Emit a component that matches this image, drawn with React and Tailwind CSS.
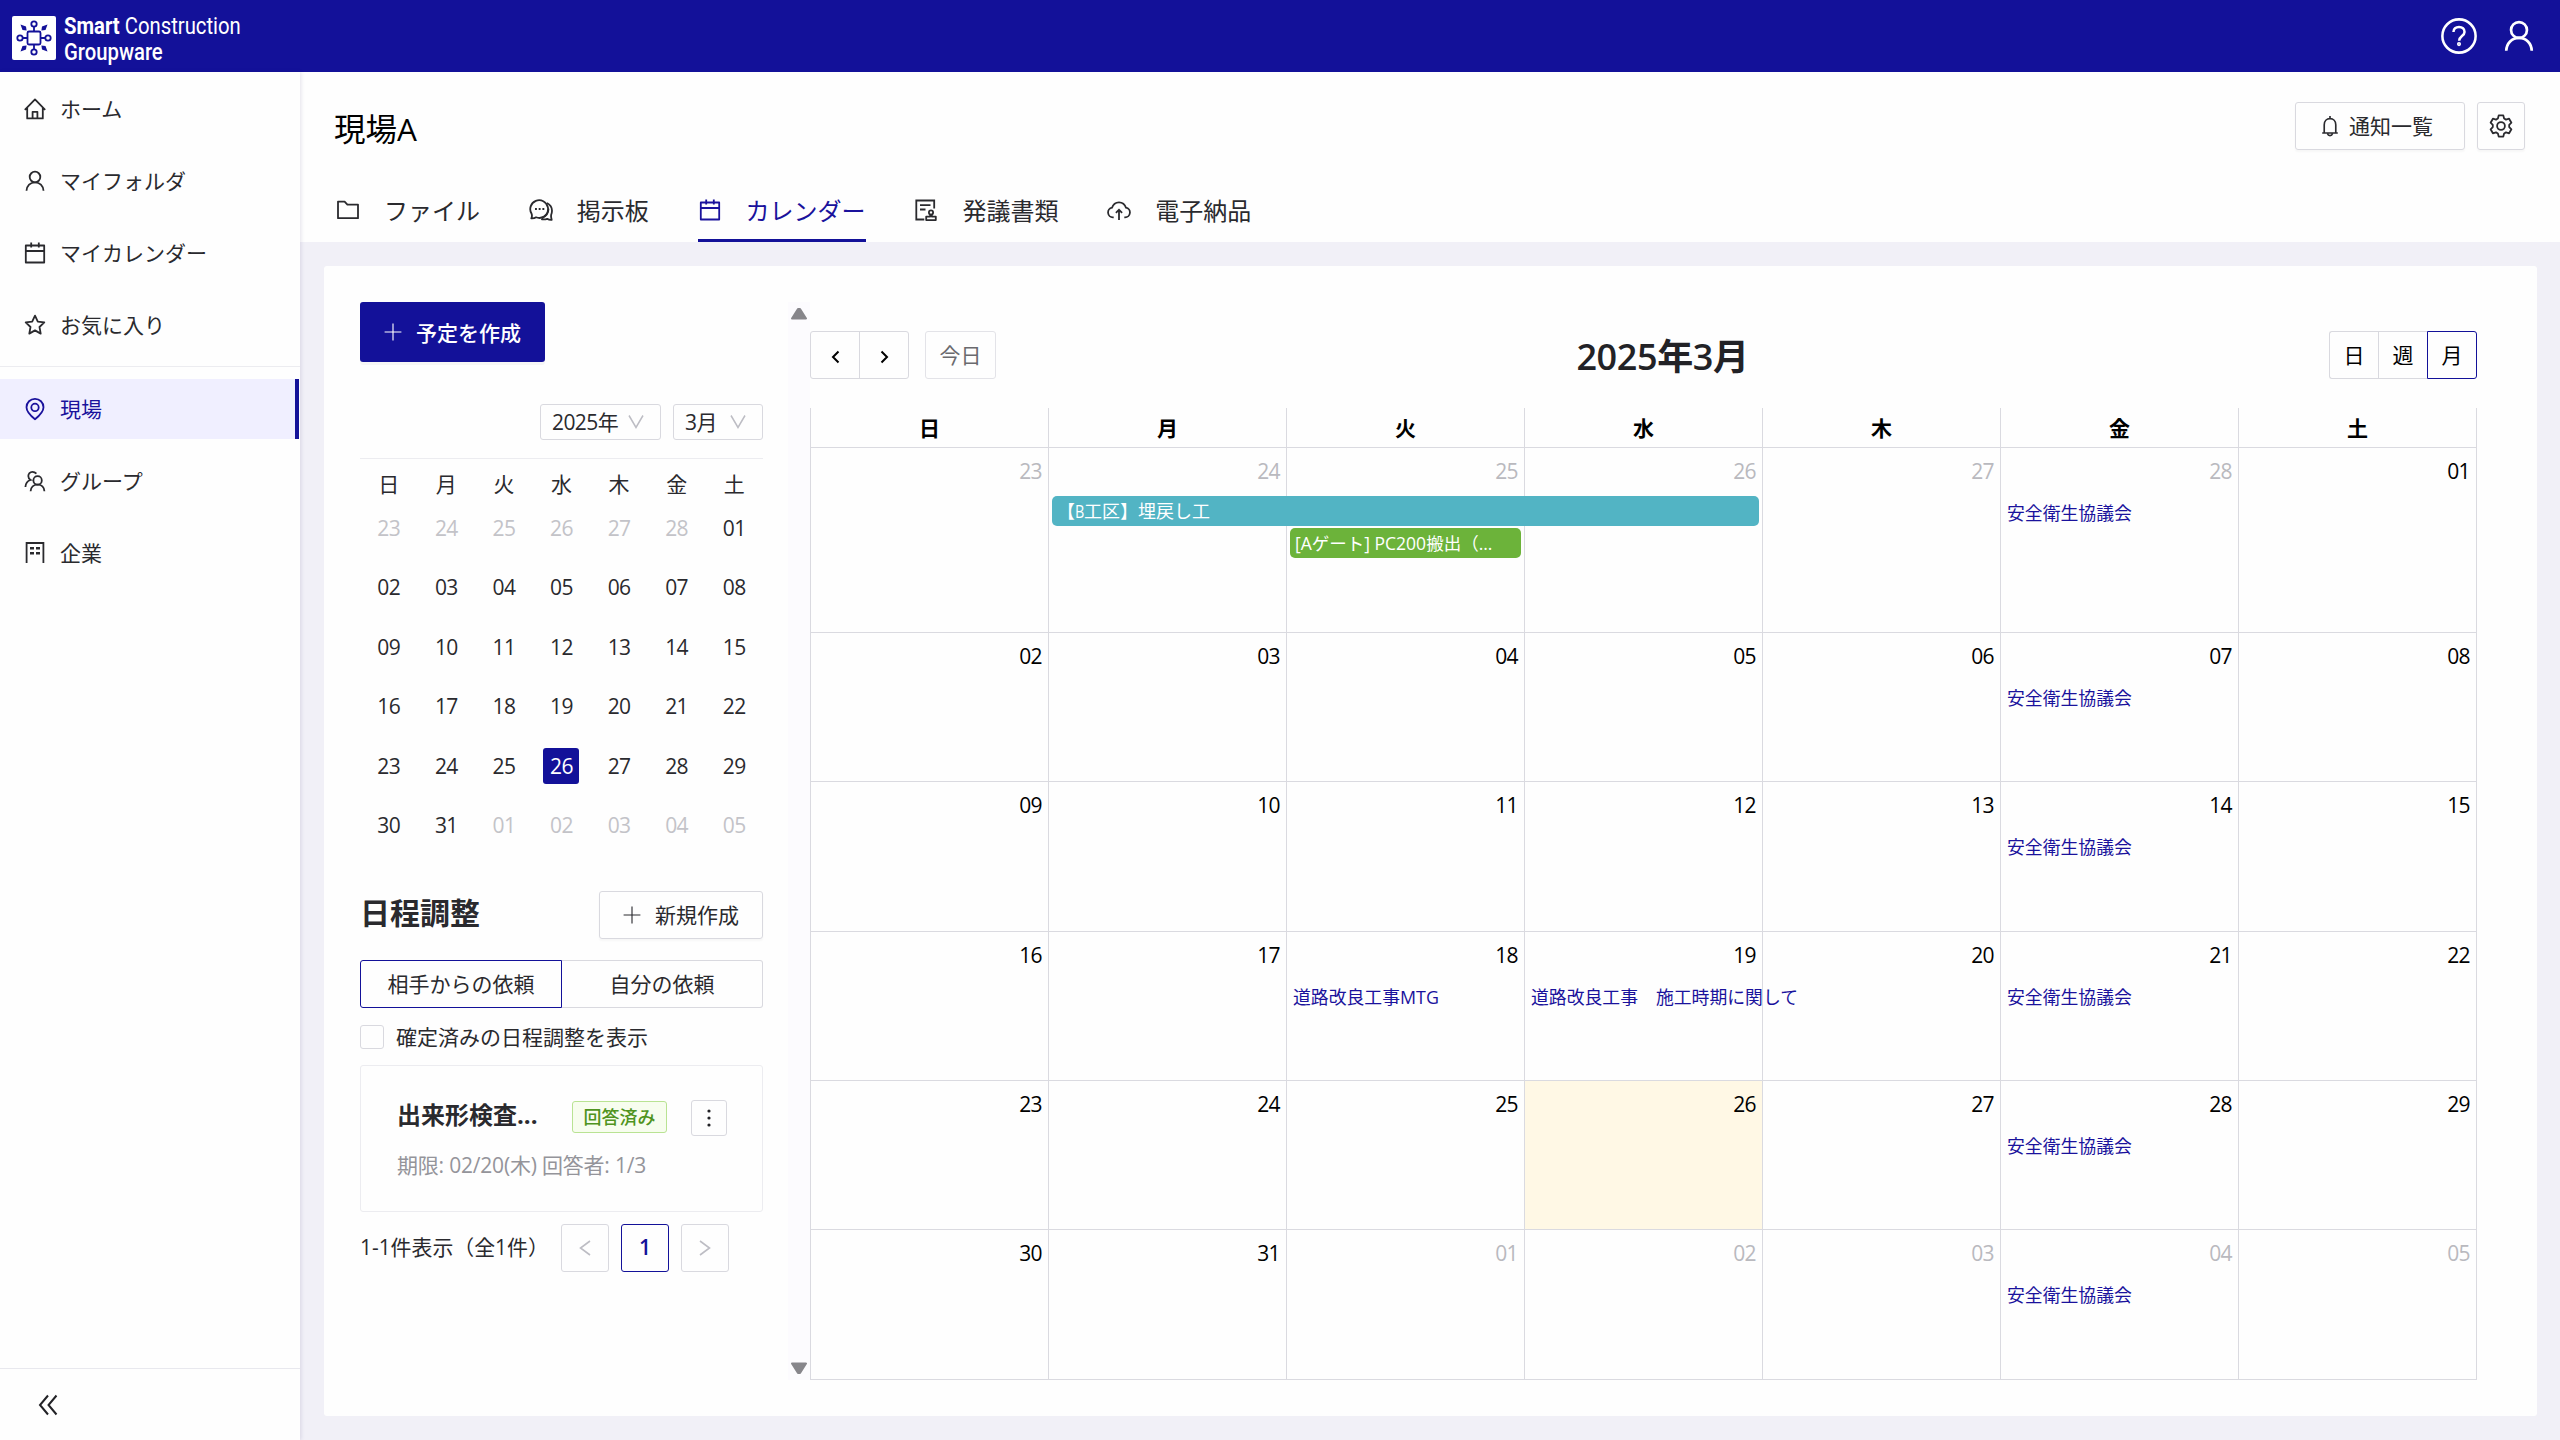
import React, { useState } from 'react';

const WEEK = ['日', '月', '火', '水', '木', '金', '土'];

const DAYS = [
  ['23', '24', '25', '26', '27', '28', '01'],
  ['02', '03', '04', '05', '06', '07', '08'],
  ['09', '10', '11', '12', '13', '14', '15'],
  ['16', '17', '18', '19', '20', '21', '22'],
  ['23', '24', '25', '26', '27', '28', '29'],
  ['30', '31', '01', '02', '03', '04', '05'],
];

const events = {
  '0-5': '安全衛生協議会',
  '1-5': '安全衛生協議会',
  '2-5': '安全衛生協議会',
  '3-2': '道路改良工事MTG',
  '3-3': '道路改良工事　施工時期に関して',
  '3-5': '安全衛生協議会',
  '4-5': '安全衛生協議会',
  '5-5': '安全衛生協議会',
};

const isOtherMonth = (row, col) => (row === 0 && col < 6) || (row === 5 && col > 1);

function Icon({ size = 24, stroke = 1.8, className = '', children }) {
  return (
    <svg
      width={size}
      height={size}
      viewBox="0 0 24 24"
      fill="none"
      stroke="currentColor"
      strokeWidth={stroke}
      className={`shrink-0 ${className}`}
    >
      {children}
    </svg>
  );
}

const HomeIcon = () => (
  <Icon>
    <path d="M1.8 12.8 12 2.4l10.2 10.4M4.2 10.8v10.6h15.6V10.8M9.6 21v-6.2h4.8V21" strokeLinejoin="round" />
  </Icon>
);

const UserIcon = ({ size, stroke }) => (
  <Icon size={size} stroke={stroke}>
    <circle cx="12" cy="8" r="5.3" />
    <path d="M3.5 21.8c.2-5 3.8-8.5 8.5-8.5s8.3 3.5 8.5 8.5" />
  </Icon>
);

const CalendarIcon = () => (
  <Icon>
    <path d="M2.8 4.5h18.4v17H2.8zM2.8 10h18.4M8.2 1.6v5M15.8 1.6v5" strokeLinejoin="round" />
  </Icon>
);

const StarIcon = () => (
  <Icon>
    <path d="m12 2.6 2.8 6 6.5.8-4.8 4.6 1.2 6.6-5.7-3.2-5.7 3.2 1.2-6.6-4.8-4.6 6.5-.8z" strokeLinejoin="round" />
  </Icon>
);

const PinIcon = () => (
  <Icon>
    <path d="M12 22.2C6.2 17.6 3.5 14 3.5 10.2A8.5 8.5 0 0 1 12 1.8a8.5 8.5 0 0 1 8.5 8.4c0 3.8-2.7 7.4-8.5 12z" />
    <circle cx="12" cy="10.4" r="3.7" />
  </Icon>
);

const GroupIcon = () => (
  <Icon>
    <circle cx="14.6" cy="11.4" r="4.2" />
    <path d="M7.6 22.2c.2-3.9 3-6.6 7-6.6s6.600 2.700 6.800 6.600M13.400 4.600C12.300 3.400 11 2.800 9.400 2.800c-2.400 0-4.100 1.900-4.100 4.300 0 1.700.9 3.200 2.300 3.900-3.300.9-5 3.500-5.200 7" />
  </Icon>
);

const BuildingIcon = () => (
  <Icon>
    <path d="M3.600 22V2h16.800v20" />
    <path d="M7 7.200h4M13 7.200h4M7 12.200h4M13 12.200h4" strokeWidth="2.600" />
  </Icon>
);

const FolderIcon = () => (
  <Icon>
    <path d="M2 3.600h6.600l2.800 3H22v13.600H2z" strokeLinejoin="round" />
  </Icon>
);

const ChatIcon = () => (
  <Icon>
    <path d="M2.300 20.400c.9-2 .8-3.400.3-4.600A8.900 8.900 0 1 1 10.600 20c-1.300 0-2.400-.2-3.500-.7-1.300.9-2.900 1.200-4.800 1.100z" strokeLinejoin="round" />
    <path d="M18 5c3.200 1.700 5 4.500 5 7.800 0 1.700-.4 3-.9 4.200-.2 1.400-.1 3 .6 4.900-1.700.1-3.200-.2-4.500-1.100-1.800.7-3.900.9-6 .3M19.500 10.800c0 4.600-2.900 7.800-6.700 9.400" strokeLinejoin="round" />
    <path d="M6 11h1.900M9.700 11h1.900M13.400 11h1.900" />
  </Icon>
);

const DocIcon = () => (
  <Icon>
    <path d="M20.200 10.500V2.500H2.300v19h8M6 7.200h10.500M6 11.500h5.500" />
    <circle cx="17" cy="14.400" r="2.100" />
    <path d="M16.200 16.400v2.200h-4v3.500h9.600v-3.500h-4v-2.200" strokeLinejoin="round" />
  </Icon>
);

const CloudIcon = () => (
  <Icon>
    <path d="M6.700 19.400H6a4.900 4.900 0 0 1-1-9.700C6.100 6.300 8.700 4.300 12 4.300s5.900 2 7 5.400a4.900 4.900 0 0 1-1 9.700h-.7M12 22V12M8.900 14.800 12 11.700l3.100 3.100" />
  </Icon>
);

const BellIcon = () => (
  <Icon size={22}>
    <path d="M3.500 19.600h17M5.700 19.400V10.500c0-4 2.700-6.600 6.300-6.600s6.300 2.600 6.300 6.600v8.900M12 3.800V1.200M9.300 20.500c.4 1.300 1.300 2 2.700 2s2.300-.7 2.700-2" />
  </Icon>
);

const GearIcon = () => (
  <Icon>
    <path d="M9.700 1.400h4.600l.8 3.100 1.900 1.100 3.100-.9 2.300 4-2.200 2.200v2.200l2.200 2.200-2.300 4-3.100-.9-1.900 1.100-.8 3.100H9.700l-.8-3.100L7 18.400l-3.100.9-2.300-4 2.200-2.200v-2.200L1.600 8.700l2.300-4 3.100.9 1.900-1.100z" strokeLinejoin="round" />
    <circle cx="12" cy="12" r="3.900" />
  </Icon>
);

const PlusIcon = () => (
  <Icon size={18} stroke={1.5}>
    <path d="M12 .8v22.400M.8 12h22.400" />
  </Icon>
);

const Chevron = () => (
  <svg width="16" height="16" viewBox="0 0 16 16" fill="none" stroke="#bdbdc4" strokeWidth="1.5">
    <path d="m1 1.500 7 12 7-12" />
  </svg>
);

function Logo() {
  return (
    <svg width="44" height="44" viewBox="0 0 44 44" className="shrink-0">
      <rect width="44" height="44" rx="2" fill="#fff" />
      <g fill="none" stroke="#131199" strokeWidth="1.8">
        <rect x="15.5" y="15.5" width="13" height="13" rx="1.5" />
        <path d="M22 15.500v-5M22 28.500v5M15.500 22h-5M28.500 22h5" />
        <circle cx="22" cy="8" r="2.7" />
        <circle cx="22" cy="36" r="2.7" />
        <circle cx="8" cy="22" r="2.7" />
        <circle cx="36" cy="22" r="2.7" />
      </g>
      <g fill="#131199">
        <path d="m8.500 8.500 5.500 2 .6 4.100-4.100-.6zM35.500 8.500l-5.500 2-.6 4.100 4.100-.6zM8.500 35.500l2-5.500 4.100-.6-.6 4.100zM35.500 35.500l-2-5.500-4.100-.6.6 4.100z" />
      </g>
    </svg>
  );
}

function Header() {
  return (
    <header className="flex h-[72px] items-center justify-between bg-[#131199] pl-3 pr-[23px] text-white">
      <div className="flex items-center gap-2 pt-[3px]">
        <Logo />
        <div className="w-[176px] origin-left scale-x-[0.845] whitespace-nowrap pt-[2px] font-['Roboto'] text-[24px] leading-[26px]">
          <div>
            <span className="font-bold">Smart</span> Construction
          </div>
          <div className="font-medium">Groupware</div>
        </div>
      </div>
      <div className="flex items-center gap-[23px]">
        <Icon size={38} stroke={1.6}>
          <circle cx="12" cy="12" r="10.500" />
          <path d="M8.500 9.500c0-2 1.500-3.200 3.500-3.200s3.500 1.200 3.500 3.100c0 2.600-3.400 2.700-3.400 5.600" />
          <circle cx="12" cy="17.100" r=".5" />
        </Icon>
        <UserIcon size={36} stroke={1.8} />
      </div>
    </header>
  );
}

function NavItem({ icon, label, active }) {
  return (
    <div
      className={`flex h-[60px] items-center gap-[13px] pl-[23px] ${
        active ? 'mr-px border-r-4 border-[#131199] bg-[#f0efff] text-[#1a129c]' : 'text-[#2a2a2e]'
      }`}
    >
      {icon}
      <span className="text-[21px] leading-[30px]">{label}</span>
    </div>
  );
}

function Sidebar() {
  return (
    <aside className="z-10 flex w-[300px] shrink-0 flex-col bg-[#fefefe] pt-[7px] shadow-[1px_0_4px_rgba(30,20,90,0.12)]">
      <div className="flex flex-col gap-3">
        <NavItem icon={<HomeIcon />} label="ホーム" />
        <NavItem icon={<UserIcon />} label="マイフォルダ" />
        <NavItem icon={<CalendarIcon />} label="マイカレンダー" />
        <NavItem icon={<StarIcon />} label="お気に入り" />
      </div>
      <div className="mb-3 mt-[11px] h-px bg-[#ececf0]" />
      <div className="flex flex-col gap-3">
        <NavItem icon={<PinIcon />} label="現場" active />
        <NavItem icon={<GroupIcon />} label="グループ" />
        <NavItem icon={<BuildingIcon />} label="企業" />
      </div>
      <div className="mt-auto flex h-[72px] items-center border-t border-[#e8e8ee] pl-9">
        <svg width="24" height="24" viewBox="0 0 24 24" fill="none" stroke="#222226" strokeWidth="2">
          <path d="m12 2.500-8 9.500 8 9.500M20.500 2.500l-8 9.500 8 9.500" />
        </svg>
      </div>
    </aside>
  );
}

function Tab({ icon, label, active }) {
  return (
    <div
      className={`flex h-[62px] items-center gap-6 border-b-[3px] ${
        active ? 'border-[#131199] text-[#1a129c]' : 'border-transparent text-[#2a2a2e]'
      }`}
    >
      {icon}
      <span className="pt-[2px] text-2xl">{label}</span>
    </div>
  );
}

function PageHead() {
  return (
    <div className="flex h-[170px] flex-col justify-between bg-[#fefefe] pl-9 pr-[35px]">
      <div className="flex items-start justify-between pt-[30px]">
        <h1 className="-ml-[2px] pt-[3px] text-[31.5px] leading-[48px] text-black">現場A</h1>
        <div className="flex gap-3 text-[#2a2a2e]">
          <button className="flex h-12 w-[170px] items-center justify-center gap-2 rounded-[3px] border border-[#d9d9df] pr-2 text-[21px] shadow-[0_2px_2px_rgba(0,0,0,0.03)]">
            <BellIcon />
            <span className="pt-[2px]">通知一覧</span>
          </button>
          <button className="flex h-12 w-12 items-center justify-center rounded-[3px] border border-[#d9d9df] shadow-[0_2px_2px_rgba(0,0,0,0.03)]">
            <GearIcon />
          </button>
        </div>
      </div>
      <div className="flex gap-[48.8px]">
        <Tab icon={<FolderIcon />} label="ファイル" />
        <Tab icon={<ChatIcon />} label="掲示板" />
        <Tab icon={<CalendarIcon />} label="カレンダー" active />
        <Tab icon={<DocIcon />} label="発議書類" />
        <Tab icon={<CloudIcon />} label="電子納品" />
      </div>
    </div>
  );
}

function MiniCalendar() {
  return (
    <div>
      <div className="flex justify-end gap-3">
        <div className="flex h-9 w-[121px] items-center justify-between rounded-[3px] border border-[#d9d9df] pl-[11px] pr-4 text-[21px] tracking-[-0.6px]">
          <span className="pt-px">2025年</span>
          <Chevron />
        </div>
        <div className="flex h-9 w-[90px] items-center justify-between rounded-[3px] border border-[#d9d9df] pl-[11px] pr-4 text-[21px] tracking-[-0.6px]">
          <span className="pt-px">3月</span>
          <Chevron />
        </div>
      </div>
      <div className="mt-[18px] h-px bg-[#ececf0]" />
      <div className="mt-[11px] grid h-[28px] grid-cols-7 text-center text-[21px] leading-[29px]">
        {WEEK.map((w) => (
          <span key={w}>{w}</span>
        ))}
      </div>
      {DAYS.map((week, row) => (
        <div key={row} className="grid h-[59.5px] grid-cols-7 place-items-center text-[21px] tracking-[-0.6px]">
          {week.map((day, col) => (
            <span
              key={col}
              className={`h-9 w-9 rounded-[3px] text-center leading-[37px] ${
                row === 4 && col === 3
                  ? 'bg-[#131199] text-white'
                  : isOtherMonth(row, col)
                  ? 'text-[#c3c3c8]'
                  : ''
              }`}
            >
              {day}
            </span>
          ))}
        </div>
      ))}
    </div>
  );
}

function Adjustments() {
  const [showFixed, setShowFixed] = useState(false);

  return (
    <div>
      <div className="flex h-12 items-center justify-between">
        <h2 className="-mt-[5px] text-[30px] font-bold leading-[40px]">日程調整</h2>
        <button className="flex h-12 w-[164px] items-center justify-center gap-[14px] rounded-[3px] border border-[#d9d9df] text-[21px] shadow-[0_2px_2px_rgba(0,0,0,0.03)]">
          <PlusIcon />
          <span className="pt-px">新規作成</span>
        </button>
      </div>
      <div className="mt-[21px] flex h-12 text-[21px]">
        <button className="w-[202px] rounded-l-[3px] border border-[#131199] pt-px">相手からの依頼</button>
        <button className="flex-1 rounded-r-[3px] border border-l-0 border-[#d9d9df] pt-px">自分の依頼</button>
      </div>
      <label className="mt-[14px] flex h-[30px] items-center gap-3 text-[21px]">
        <input
          type="checkbox"
          checked={showFixed}
          onChange={(e) => setShowFixed(e.target.checked)}
          className="h-6 w-6 appearance-none rounded-[3px] border border-[#d9d9df]"
        />
        <span className="pt-px">確定済みの日程調整を表示</span>
      </label>
      <div className="mt-[13px] h-[147px] rounded-[3px] border border-[#ececf0] pl-9 pr-[35px] pt-[34px]">
        <div className="flex h-9 items-center">
          <span className="-mt-[7px] w-[175px] text-2xl font-bold leading-9">出来形検査...</span>
          <span className="-mt-[2px] flex h-8 w-[95px] items-center justify-center rounded-[3px] border border-[#b9e393] bg-[#f7fdee] text-[18px] font-medium text-[#4f9320]">
            回答済み
          </span>
          <button className="ml-auto flex h-9 w-9 items-center justify-center rounded-[3px] border border-[#d9d9df]">
            <svg width="4" height="18" viewBox="0 0 4 18" fill="#222226">
              <circle cx="2" cy="2" r="1.6" />
              <circle cx="2" cy="9" r="1.6" />
              <circle cx="2" cy="16" r="1.6" />
            </svg>
          </button>
        </div>
        <p className="mt-[13px] text-[21px] leading-[32px] tracking-[-0.2px] text-[#94949a]">期限: 02/20(木) 回答者: 1/3</p>
      </div>
      <div className="mt-3 flex h-12 items-center">
        <span className="w-[201px] whitespace-nowrap text-[20.9px]">1-1件表示（全1件）</span>
        <button className="flex h-12 w-12 items-center justify-center rounded-[3px] border border-[#d9d9df]">
          <svg width="12" height="16" viewBox="0 0 12 16" fill="none" stroke="#bdbdc4" strokeWidth="1.6">
            <path d="M11 1 1.500 8l9.500 7" />
          </svg>
        </button>
        <button className="ml-3 h-12 w-12 rounded-[3px] border border-[#131199] text-[21px] font-semibold text-[#131199]">
          1
        </button>
        <button className="ml-3 flex h-12 w-12 items-center justify-center rounded-[3px] border border-[#d9d9df]">
          <svg width="12" height="16" viewBox="0 0 12 16" fill="none" stroke="#bdbdc4" strokeWidth="1.6">
            <path d="m1 1 9.500 7L1 15" />
          </svg>
        </button>
      </div>
    </div>
  );
}

function ScrollTrack() {
  return (
    <div className="flex w-[22px] flex-col items-center justify-between bg-[#fcfbfe] py-[5px]">
      <svg width="16" height="13" viewBox="0 0 16 13" fill="#87868b" stroke="#87868b" strokeWidth="2" strokeLinejoin="round">
        <path d="M7 2h2l6 9.500H1z" />
      </svg>
      <svg width="16" height="13" viewBox="0 0 16 13" fill="#87868b" stroke="#87868b" strokeWidth="2" strokeLinejoin="round">
        <path d="M7 11h2l6-9.500H1z" />
      </svg>
    </div>
  );
}

function MonthCalendar() {
  return (
    <div className="flex w-[1667px] flex-col pt-[29px]">
      <div className="flex h-12 items-center justify-between text-[21px] text-black">
        <div className="flex gap-4">
          <div className="flex h-12 w-[99px] rounded-[3px] border border-[#d9d9df]">
            <button className="flex flex-1 items-center justify-center border-r border-[#d9d9df] pt-[3px]">
              <svg width="10" height="14" viewBox="0 0 10 14" fill="none" stroke="#000" strokeWidth="2">
                <path d="M8.500 1.500 3 7l5.500 5.500" />
              </svg>
            </button>
            <button className="flex flex-1 items-center justify-center pt-[3px]">
              <svg width="10" height="14" viewBox="0 0 10 14" fill="none" stroke="#000" strokeWidth="2">
                <path d="M2.500 1.500 8 7l-5.500 5.500" />
              </svg>
            </button>
          </div>
          <button className="h-12 w-[71px] rounded-[3px] border border-[#e3e3e8] pt-[2px] text-[#6a6a6e]">今日</button>
        </div>
        <h2 className="pt-[3px] text-center text-[36px] font-semibold leading-[48px] tracking-[-0.4px] text-[#222226]">
          2025年3月
        </h2>
        <div className="flex justify-end">
          <button className="h-12 w-[49px] rounded-l-[3px] border border-r-0 border-[#d9d9df] pt-[2px]">日</button>
          <button className="h-12 w-[49px] border border-r-0 border-[#d9d9df] pt-[2px]">週</button>
          <button className="h-12 w-[50px] rounded-r-[3px] border border-[#131199] pt-[2px]">月</button>
        </div>
      </div>

      <div className="mt-[29px] grid h-[40px] grid-cols-7 border-b border-l border-[#dadae0] text-center text-[21px] font-bold leading-[40px] text-black">
        {WEEK.map((w) => (
          <div key={w} className="border-r border-[#dadae0]">
            {w}
          </div>
        ))}
      </div>
      <div className="grid flex-1 grid-cols-7 grid-rows-[185px_149fr_150fr_149fr_149fr_150fr] border-l border-[#dadae0]">
        {DAYS.map((week, row) =>
          week.map((day, col) => (
            <div
              key={`${row}-${col}`}
              className={`relative min-w-0 border-b border-r border-[#dadae0] ${
                row === 4 && col === 3 ? 'bg-[#fff8e5]' : ''
              }`}
            >
              <div
                className={`pr-[6px] pt-[8px] text-right text-[21px] leading-[30px] tracking-[-0.6px] ${
                  isOtherMonth(row, col) ? 'text-[#b9b9be]' : 'text-black'
                }`}
              >
                {day}
              </div>
              {events[`${row}-${col}`] && (
                <div className="relative z-10 whitespace-nowrap pl-[6px] pt-[12px] text-[17.85px] leading-[30px] text-[#1a129c]">
                  {events[`${row}-${col}`]}
                </div>
              )}
              {row === 0 && col === 1 && (
                <div className="absolute left-[3px] top-12 z-10 h-[30px] w-[707px] rounded-[5px] bg-[#52b4c4] px-[5px] text-[18px] leading-[30px] text-white">
                  【<span className="inline-block w-[9px] origin-left scale-x-[0.8]">B</span>工区】埋戻し工
                </div>
              )}
              {row === 0 && col === 2 && (
                <div className="absolute left-[3px] top-20 z-10 h-[30px] w-[231px] whitespace-nowrap rounded-[5px] bg-[#6cb33a] px-[5px] text-[17.5px] leading-[30px] text-white">
                  [Aゲート] PC200搬出（...
                </div>
              )}
            </div>
          ))
        )}
      </div>
    </div>
  );
}

export default function App() {
  return (
    <div className="flex h-[1440px] w-[2560px] flex-col overflow-hidden bg-[#f1f0f7] font-['Open_Sans','Noto_Sans_CJK_JP',sans-serif] text-[#2a2a2e]">
      <Header />
      <div className="flex min-h-0 flex-1">
        <Sidebar />
        <main className="flex min-w-0 flex-1 flex-col">
          <PageHead />
          <section className="mb-6 ml-6 mr-[23px] mt-6 flex flex-1 rounded-[3px] bg-[#fefefe] pb-9 pl-9 pt-9">
            <div className="flex w-[403px] flex-col">
              <button className="mb-[42px] flex h-[60px] w-[185px] items-center justify-center gap-[14px] rounded-[3px] bg-[#131199] text-[21px] font-medium text-white shadow-[0_3px_0_rgba(0,0,0,0.03)]">
                <PlusIcon />
                <span className="pt-[3px]">予定を作成</span>
              </button>
              <MiniCalendar />
              <div className="h-[36px]" />
              <Adjustments />
            </div>
            <div className="w-[25px]" />
            <ScrollTrack />
            <MonthCalendar />
          </section>
        </main>
      </div>
    </div>
  );
}
